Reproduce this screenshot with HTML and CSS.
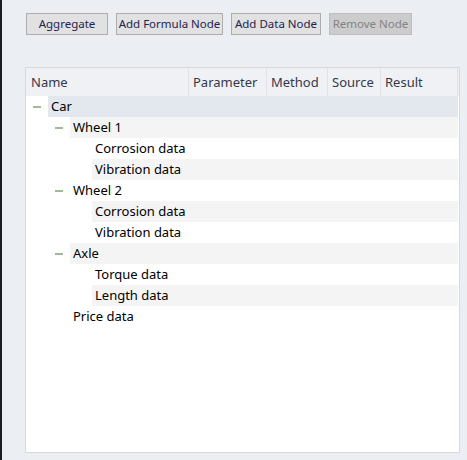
FILE: index.html
```html
<!DOCTYPE html>
<html>
<head>
<meta charset="utf-8">
<link rel="stylesheet" href="styles.css">
</head>
<body>
<div class="app">
  <div class="toolbar">
    <button class="btn w-agg">Aggregate</button>
    <button class="btn w-formula">Add Formula Node</button>
    <button class="btn w-data">Add Data Node</button>
    <button class="btn w-remove" disabled>Remove Node</button>
  </div>
  <div class="tree">
    <div class="head">
      <div class="col c-name">Name</div>
      <div class="col c-param">Parameter</div>
      <div class="col c-method">Method</div>
      <div class="col c-source">Source</div>
      <div class="col c-result">Result</div>
    </div>
    <div class="row lvl0 current"><span class="exp open"></span><span class="cell">Car</span></div>
    <div class="row lvl1 alt"><span class="exp open"></span><span class="cell">Wheel 1</span></div>
    <div class="row lvl2"><span class="exp"></span><span class="cell">Corrosion data</span></div>
    <div class="row lvl2 alt"><span class="exp"></span><span class="cell">Vibration data</span></div>
    <div class="row lvl1"><span class="exp open"></span><span class="cell">Wheel 2</span></div>
    <div class="row lvl2 alt"><span class="exp"></span><span class="cell">Corrosion data</span></div>
    <div class="row lvl2"><span class="exp"></span><span class="cell">Vibration data</span></div>
    <div class="row lvl1 alt"><span class="exp open"></span><span class="cell">Axle</span></div>
    <div class="row lvl2"><span class="exp"></span><span class="cell">Torque data</span></div>
    <div class="row lvl2 alt"><span class="exp"></span><span class="cell">Length data</span></div>
    <div class="row lvl1"><span class="exp"></span><span class="cell">Price data</span></div>
  </div>
</div>
</body>
</html>
```
FILE: styles.css
```css
html, body {
  margin: 0;
  padding: 0;
  height: 100%;
}

body {
  background: #ebeef2;
  font-family: "Noto Sans", "Open Sans", sans-serif;
}

.app {
  box-sizing: border-box;
  height: 460px;
  border-left: 2px solid #1e1e22;
  padding-top: 13px;
}

/* toolbar */
.toolbar {
  display: flex;
  gap: 8px;
  padding-left: 24px;
  height: 22px;
}

.btn {
  box-sizing: border-box;
  height: 22px;
  margin: 0;
  padding: 0;
  background: #e1e1e1;
  border: 1px solid #adadad;
  border-radius: 0;
  color: #1d2352;
  font-family: "Noto Sans", sans-serif;
  font-size: 11.5px;
  line-height: 20px;
  white-space: nowrap;
  overflow: hidden;
}

.btn:disabled {
  background: #cccccc;
  border-color: #bfbfbf;
  color: #838383;
}

.w-agg { width: 82px; }
.w-formula { width: 107px; }
.w-data { width: 90px; }
.w-remove { width: 83px; }

/* tree view */
.tree {
  box-sizing: border-box;
  margin: 32px 0 0 23px;
  width: 435px;
  height: 386px;
  background: #fff;
  border: 1px solid #d7d9dd;
  font-size: 13px;
  color: #000;
}

.head {
  display: flex;
  height: 28px;
  background: #eff1f4;
  color: #33384a;
}

.col {
  box-sizing: border-box;
  line-height: 28px;
  padding-left: 4px;
  border-right: 1px solid #dfe2e7;
  white-space: nowrap;
  overflow: hidden;
}

.c-name { width: 163px; padding-left: 5px; }
.c-param { width: 78px; }
.c-method { width: 61px; }
.c-source { width: 53px; }
.c-result { width: 77px; }

.row {
  display: flex;
  height: 21px;
  line-height: 21px;
}

.row.lvl0 { width: 432px; }
.row.lvl1 { width: 410px; padding-left: 22px; }
.row.lvl2 { width: 388px; padding-left: 44px; }

.exp {
  position: relative;
  flex: 0 0 22px;
}

/* collapse marker drawn as a short bar */
.exp.open::before {
  content: "";
  position: absolute;
  left: 7px;
  top: 10px;
  width: 8px;
  height: 2px;
  background: #a3b899;
}

.cell {
  flex: 1;
  padding-left: 3px;
  white-space: nowrap;
}

.alt .cell { background: #f4f4f4; }
.current .cell { background: #e3e7ee; }
```
